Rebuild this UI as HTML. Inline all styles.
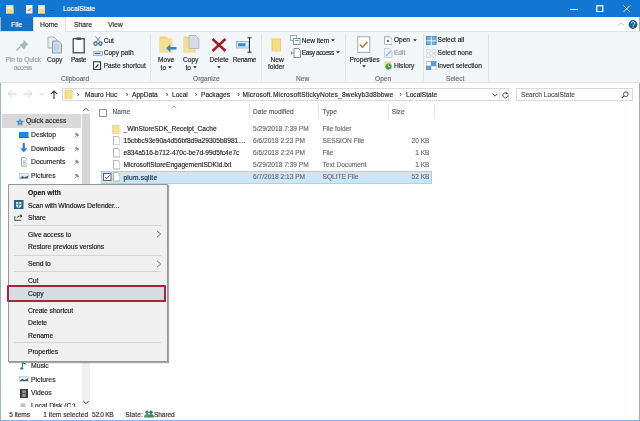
<!DOCTYPE html>
<html><head><meta charset="utf-8">
<style>
*{margin:0;padding:0;box-sizing:border-box}
html,body{width:640px;height:421px;overflow:hidden;background:#fff}
body{position:relative;font-family:"Liberation Sans",sans-serif;font-size:6.6px;color:#1e1e1e}
.t{position:absolute;white-space:nowrap;line-height:10px;height:10px;-webkit-text-stroke:0.15px currentColor}
.r{position:absolute;display:block}
#wrap{position:absolute;left:0;top:0;width:640px;height:421px;filter:blur(0.3px)}
</style></head><body><div id="wrap">

<div class="r" style="left:0px;top:0px;width:640px;height:17px;background:#1276d3"></div>
<svg class="r" style="left:6px;top:4.5px;" width="8" height="9" viewBox="0 0 8 9"><rect x="0" y="0" width="7.5" height="8.5" fill="#f4d77c"/><rect x="1.2" y="1.5" width="5" height="5.5" fill="#fdf3cf"/><rect x="0" y="4" width="7.5" height="4.5" fill="#f6dc8a"/></svg>
<svg class="r" style="left:25.5px;top:4.5px;" width="7" height="9" viewBox="0 0 7 9"><rect x="0" y="0" width="6.5" height="8.5" fill="#fbfbfb"/><path d="M1.5 4.8l1.2 1.2 2.3-2.8" fill="none" stroke="#d0563f" stroke-width="1"/></svg>
<svg class="r" style="left:38px;top:4.5px;" width="8" height="9" viewBox="0 0 8 9"><rect x="0" y="0" width="7" height="8.5" fill="#f4d77c"/><rect x="1.2" y="1.5" width="4.6" height="5.5" fill="#fdf3cf"/><rect x="0" y="4" width="7" height="4.5" fill="#f6dc8a"/></svg>
<div class="r" style="left:50px;top:9.5px;width:4px;height:1px;background:#2b4f78"></div>
<div class="t" style="left:63px;top:4px;color:#ffffff;font-size:6.8px;">LocalState</div>
<div class="r" style="left:570px;top:8.5px;width:7.5px;height:1px;background:#fff"></div>
<svg class="r" style="left:596px;top:4.5px;" width="7.5" height="7.5" viewBox="0 0 7.5 7.5"><rect x="0.75" y="0.75" width="6" height="6" fill="none" stroke="#e6f1fb" stroke-width="1.4"/></svg>
<svg class="r" style="left:623px;top:5px;" width="7.5" height="7.5" viewBox="0 0 7.5 7.5"><path d="M0.5 0.5L7 7M7 0.5L0.5 7" stroke="#eef6fd" stroke-width="0.9"/></svg>
<div class="r" style="left:0px;top:17px;width:640px;height:14px;background:#fff"></div>
<div class="r" style="left:0px;top:17px;width:33px;height:14px;background:#1672c6"></div>
<div class="t" style="left:11px;top:19.5px;color:#ffffff;font-size:6.8px;">File</div>
<div class="r" style="left:33px;top:17px;width:33px;height:15px;background:#f6f8fa;border:1px solid #dfe3e6;border-bottom:none;z-index:2"></div>
<div style="position:absolute;z-index:3;left:0;top:0">
<div class="t" style="left:40px;top:19.5px;color:#2b2b2b;font-size:6.8px;">Home</div>
</div>
<div class="t" style="left:74px;top:19.5px;color:#2b2b2b;font-size:6.8px;">Share</div>
<div class="t" style="left:108px;top:19.5px;color:#2b2b2b;font-size:6.8px;">View</div>
<svg class="r" style="left:617px;top:21px;" width="8" height="6" viewBox="0 0 8 6"><path d="M1.2 4.5L4 1.7 6.8 4.5" fill="none" stroke="#b5b5b5" stroke-width="0.9"/></svg>
<svg class="r" style="left:628px;top:19px;" width="11" height="11" viewBox="0 0 11 11"><circle cx="5" cy="5.5" r="4.4" fill="#1c5f95"/><path d="M3.5 4.2a1.6 1.6 0 1 1 2.4 1.4c-.6.3-.8.6-.8 1.1" fill="none" stroke="#fff" stroke-width="1"/><circle cx="5.1" cy="8" r=".6" fill="#fff"/></svg>
<div class="r" style="left:0px;top:31px;width:640px;height:52px;background:#f3f6f8;border-top:1px solid #dfe3e6;border-bottom:1px solid #e2e5e8;z-index:1"></div>
<div style="position:absolute;left:0;top:0;z-index:4">
<div class="r" style="left:150px;top:34px;width:1px;height:47px;background:#e2e3e4"></div>
<div class="r" style="left:261px;top:34px;width:1px;height:47px;background:#e2e3e4"></div>
<div class="r" style="left:345px;top:34px;width:1px;height:47px;background:#e2e3e4"></div>
<div class="r" style="left:423px;top:34px;width:1px;height:47px;background:#e2e3e4"></div>
<div class="r" style="left:488px;top:34px;width:1px;height:47px;background:#e2e3e4"></div>
<div class="t" style="left:61px;top:73.5px;color:#6f6f6f;font-size:6.6px;">Clipboard</div>
<div class="t" style="left:193px;top:73.5px;color:#6f6f6f;font-size:6.6px;">Organize</div>
<div class="t" style="left:296px;top:73.5px;color:#6f6f6f;font-size:6.6px;">New</div>
<div class="t" style="left:375px;top:73.5px;color:#6f6f6f;font-size:6.6px;">Open</div>
<div class="t" style="left:446px;top:73.5px;color:#6f6f6f;font-size:6.6px;">Select</div>
<div class="t" style="left:5.5px;top:55px;color:#9a9a9a;font-size:6.6px;">Pin to Quick</div>
<div class="t" style="left:14px;top:62.5px;color:#9a9a9a;font-size:6.6px;letter-spacing:-0.424px;">access</div>
<div class="t" style="left:47px;top:55px;color:#262626;font-size:6.6px;">Copy</div>
<div class="t" style="left:71px;top:55px;color:#262626;font-size:6.6px;letter-spacing:-0.375px;">Paste</div>
<div class="t" style="left:103.7px;top:35.5px;color:#262626;font-size:6.6px;">Cut</div>
<div class="t" style="left:103.7px;top:48.4px;color:#262626;font-size:6.6px;">Copy path</div>
<div class="t" style="left:103.7px;top:60.5px;color:#262626;font-size:6.6px;">Paste shortcut</div>
<div class="t" style="left:158px;top:54.7px;color:#262626;font-size:6.6px;">Move</div>
<div class="t" style="left:160.6px;top:62.5px;color:#262626;font-size:6.6px;">to</div>
<svg class="r" style="left:168.4px;top:66.1px" width="4" height="3" viewBox="0 0 4 3"><path d="M0.2 0.3h3.6L2 2.6z" fill="#222"/></svg>
<div class="t" style="left:183px;top:54.7px;color:#262626;font-size:6.6px;">Copy</div>
<div class="t" style="left:185.5px;top:62.5px;color:#262626;font-size:6.6px;">to</div>
<svg class="r" style="left:192.6px;top:66.1px" width="4" height="3" viewBox="0 0 4 3"><path d="M0.2 0.3h3.6L2 2.6z" fill="#222"/></svg>
<div class="t" style="left:209.6px;top:54.7px;color:#262626;font-size:6.6px;">Delete</div>
<svg class="r" style="left:217.3px;top:65.8px" width="4" height="3" viewBox="0 0 4 3"><path d="M0.2 0.3h3.6L2 2.6z" fill="#222"/></svg>
<div class="t" style="left:232.8px;top:54.7px;color:#262626;font-size:6.6px;letter-spacing:-0.291px;">Rename</div>
<div class="t" style="left:270.6px;top:54.9px;color:#262626;font-size:6.6px;">New</div>
<div class="t" style="left:268px;top:62.3px;color:#262626;font-size:6.6px;">folder</div>
<div class="t" style="left:301.8px;top:35.6px;color:#262626;font-size:6.6px;">New item</div>
<svg class="r" style="left:331.2px;top:39.0px" width="4" height="3" viewBox="0 0 4 3"><path d="M0.2 0.3h3.6L2 2.6z" fill="#222"/></svg>
<div class="t" style="left:301.8px;top:47.8px;color:#262626;font-size:6.6px;letter-spacing:-0.459px;">Easy access</div>
<svg class="r" style="left:335.8px;top:51.4px" width="4" height="3" viewBox="0 0 4 3"><path d="M0.2 0.3h3.6L2 2.6z" fill="#222"/></svg>
<div class="t" style="left:349.5px;top:55.1px;color:#262626;font-size:6.6px;">Properties</div>
<svg class="r" style="left:362px;top:65.39999999999999px" width="4" height="3" viewBox="0 0 4 3"><path d="M0.2 0.3h3.6L2 2.6z" fill="#222"/></svg>
<div class="t" style="left:393.9px;top:35.3px;color:#262626;font-size:6.6px;">Open</div>
<svg class="r" style="left:412.6px;top:38.9px" width="4" height="3" viewBox="0 0 4 3"><path d="M0.2 0.3h3.6L2 2.6z" fill="#222"/></svg>
<div class="t" style="left:393.9px;top:47.8px;color:#9a9a9a;font-size:6.6px;">Edit</div>
<div class="t" style="left:393.9px;top:60.8px;color:#262626;font-size:6.6px;">History</div>
<div class="t" style="left:437.5px;top:35.2px;color:#262626;font-size:6.6px;">Select all</div>
<div class="t" style="left:437.5px;top:48.3px;color:#262626;font-size:6.6px;">Select none</div>
<div class="t" style="left:437.5px;top:60.900000000000006px;color:#262626;font-size:6.6px;">Invert selection</div>
<svg class="r" style="left:15px;top:38px;" width="15" height="14" viewBox="0 0 15 14"><path d="M8.5 1.5l5 5-2 1-1.5 2.5-1 1.5-4.5-4.5 1.5-1 2.5-1.5z" fill="#a9b5c1"/><path d="M5.5 8.5L1.5 12.5" stroke="#a9b5c1" stroke-width="1.4"/></svg>
<svg class="r" style="left:47px;top:36px;" width="16" height="18" viewBox="0 0 16 18"><path d="M1 1h6l3 3v8H1z" fill="#e9eef2" stroke="#9aabb9" stroke-width="0.9"/><path d="M5.5 5h6l3 3v9h-9z" fill="#cfdde8" stroke="#7f98ad" stroke-width="0.9"/><path d="M7 9h5M7 11h5M7 13h5" stroke="#a9bccb" stroke-width="0.6"/></svg>
<svg class="r" style="left:72px;top:37px;" width="14" height="17" viewBox="0 0 14 17"><rect x="1.2" y="1.8" width="11" height="14" fill="#f7f9fb" stroke="#3b3b3b" stroke-width="1.2"/><rect x="4.5" y="0.5" width="4.5" height="2.2" fill="#3b3b3b"/></svg>
<svg class="r" style="left:92.5px;top:35.5px;" width="10" height="10" viewBox="0 0 10 10"><path d="M3 6L7.5 0.5M7 6L2.5 0.5" stroke="#7f8c96" stroke-width="0.9"/><circle cx="2.6" cy="7.6" r="1.7" fill="none" stroke="#2f7585" stroke-width="1.2"/><circle cx="7.4" cy="7.6" r="1.7" fill="none" stroke="#2f7585" stroke-width="1.2"/></svg>
<svg class="r" style="left:92.5px;top:50.5px;" width="10" height="5" viewBox="0 0 10 5"><rect x="0" y="0.5" width="9.5" height="4" fill="#d9e5ef" stroke="#7e9ab2" stroke-width="0.6"/><path d="M1.5 2.5h6" stroke="#3d6e9b" stroke-width="1.2"/></svg>
<svg class="r" style="left:93px;top:61px;" width="8.5" height="9" viewBox="0 0 8.5 9"><rect x="0.6" y="0.8" width="7" height="7.8" fill="#fff" stroke="#363636" stroke-width="1.1"/><path d="M2.6 6.6L5.4 3.3" stroke="#1a1a1a" stroke-width="1.3"/></svg>
<svg class="r" style="left:159px;top:36px;" width="18" height="17" viewBox="0 0 18 17"><path d="M0.5 0.5h7l2 2h3.5v14H0.5z" fill="#f4d57a"/><rect x="0.5" y="3" width="13" height="13.5" fill="#f7df91"/><path d="M17.5 12.3h-7" stroke="#3a87c4" stroke-width="2.6"/><path d="M7 12.3l4.3-4v8z" fill="#3a87c4"/></svg>
<svg class="r" style="left:183px;top:35px;" width="17" height="18" viewBox="0 0 17 18"><path d="M0.5 1.5h7l2 2h3v14H0.5z" fill="#f4d57a"/><rect x="0.5" y="4" width="12" height="13.5" fill="#f7df91"/><path d="M6 0.5h6.5l3.5 3.5v9.5H6z" fill="#d3dbe4" stroke="#a3b0bd" stroke-width="0.7"/></svg>
<svg class="r" style="left:211px;top:38px;" width="16" height="14" viewBox="0 0 16 14"><path d="M1.5 1L14.5 13M14.5 1L1.5 13" stroke="#a3182b" stroke-width="2.4"/></svg>
<svg class="r" style="left:236px;top:37px;" width="18" height="16" viewBox="0 0 18 16"><rect x="0.5" y="4.5" width="12.5" height="6.5" fill="#dbeaf7" stroke="#8fb3d3" stroke-width="0.8"/><rect x="2" y="6.3" width="7.5" height="3" fill="#3b89cc"/><path d="M13.5 1v14M11.5 0.8h4M11.5 15.2h4" stroke="#262626" stroke-width="1"/></svg>
<svg class="r" style="left:270.5px;top:37.5px;" width="11" height="14" viewBox="0 0 11 14"><rect x="0.5" y="0.5" width="9.5" height="13" fill="#f2cf66"/><rect x="2" y="1.5" width="7" height="11.5" fill="#f8dd8a"/></svg>
<svg class="r" style="left:290px;top:35px;" width="11" height="10" viewBox="0 0 11 10"><rect x="0.5" y="0.5" width="6" height="5" fill="#fff" stroke="#8d9aa6" stroke-width="0.8"/><rect x="3.5" y="3.5" width="6.5" height="6" fill="#fff" stroke="#6f7c88" stroke-width="0.8"/><path d="M5 5.5h3.5" stroke="#3a87c4" stroke-width="0.9"/></svg>
<svg class="r" style="left:291px;top:48px;" width="10" height="10" viewBox="0 0 10 10"><path d="M3 0.5h4.5l2 2v7H3z" fill="#fff" stroke="#6f6f6f" stroke-width="0.8"/><path d="M0.5 3.5v3M0.5 5h2" stroke="#6f6f6f" stroke-width="0.8"/></svg>
<svg class="r" style="left:357px;top:36px;" width="14" height="17" viewBox="0 0 14 17"><rect x="0.8" y="0.8" width="12" height="15.5" fill="#fff" stroke="#a7a7a7" stroke-width="1"/><path d="M3 8.5l2.5 2.8 5-5.5" fill="none" stroke="#c07a3a" stroke-width="1.6"/></svg>
<svg class="r" style="left:383.5px;top:36px;" width="8.5" height="9" viewBox="0 0 8.5 9"><path d="M0.5 0.5h5l2.5 2.5v5.5H0.5z" fill="#fff" stroke="#9ba7b1" stroke-width="0.8"/><circle cx="4" cy="5" r="1.2" fill="#2e8b57"/></svg>
<svg class="r" style="left:383.5px;top:48px;" width="9" height="10" viewBox="0 0 9 10"><path d="M0.5 0.5h5l2.5 2.5v6.5H0.5z" fill="#e8f0f8" stroke="#b8c9d8" stroke-width="0.8"/><path d="M2 8l5-5" stroke="#9db9d6" stroke-width="1.2"/></svg>
<svg class="r" style="left:383.5px;top:60.5px;" width="9" height="9.5" viewBox="0 0 9 9.5"><rect x="0.5" y="0.5" width="7" height="5" fill="#f4d57a"/><circle cx="4.5" cy="5.5" r="3.5" fill="#4e9a3f" stroke="#fff" stroke-width="0.6"/><path d="M4.5 3.5v2h1.6" stroke="#fff" stroke-width="0.7" fill="none"/></svg>
<svg class="r" style="left:426px;top:35.5px;" width="10.5" height="9.5" viewBox="0 0 10.5 9.5"><rect x="0.4" y="0.4" width="9.7" height="8.7" fill="#6aaee0" stroke="#3f86c2" stroke-width="0.8"/><path d="M5.25 0.5v8.5M0.5 4.75h9.5" stroke="#eaf4fb" stroke-width="1"/></svg>
<svg class="r" style="left:426px;top:48.5px;" width="10.5" height="9" viewBox="0 0 10.5 9"><g fill="none" stroke="#b0b7be" stroke-width="0.7" stroke-dasharray="1.2 0.6"><rect x="0.5" y="0.5" width="3.6" height="3.4" rx="0.6"/><rect x="6" y="0.5" width="3.6" height="3.4" rx="0.6"/><rect x="0.5" y="5" width="3.6" height="3.4" rx="0.6"/><rect x="6" y="5" width="3.6" height="3.4" rx="0.6"/></g></svg>
<svg class="r" style="left:426px;top:60.5px;" width="10.5" height="9.5" viewBox="0 0 10.5 9.5"><rect x="5" y="0.5" width="5" height="4.5" fill="#5ba0d6" stroke="#3e82bd" stroke-width="0.6"/><rect x="0.5" y="5" width="4.5" height="4" fill="#5ba0d6" stroke="#3e82bd" stroke-width="0.6"/><rect x="0.5" y="0.5" width="4.5" height="4.5" fill="#fff" stroke="#8faac2" stroke-width="0.6"/><rect x="5" y="5" width="5" height="4" fill="#fff" stroke="#8faac2" stroke-width="0.6"/></svg>
</div>
<div class="r" style="left:62px;top:88px;width:447px;height:13px;border:1px solid #d9d9d9;background:#fff"></div>
<div class="r" style="left:516px;top:88px;width:117px;height:13px;border:1px solid #d9d9d9;background:#fff"></div>
<div class="t" style="left:85px;top:89.5px;color:#262626;font-size:6.6px;">Mauro Huc</div>
<div class="t" style="left:132px;top:89.5px;color:#262626;font-size:6.6px;">AppData</div>
<div class="t" style="left:172px;top:89.5px;color:#262626;font-size:6.6px;">Local</div>
<div class="t" style="left:201px;top:89.5px;color:#262626;font-size:6.6px;">Packages</div>
<div class="t" style="left:242.5px;top:89.5px;color:#262626;font-size:6.6px;letter-spacing:0.181px;">Microsoft.MicrosoftStickyNotes_8wekyb3d8bbwe</div>
<div class="t" style="left:406px;top:89.5px;color:#262626;font-size:6.6px;">LocalState</div>
<div class="t" style="left:77px;top:89.5px;color:#555;font-size:6.6px;">&#8250;</div>
<div class="t" style="left:126px;top:89.5px;color:#555;font-size:6.6px;">&#8250;</div>
<div class="t" style="left:166px;top:89.5px;color:#555;font-size:6.6px;">&#8250;</div>
<div class="t" style="left:195px;top:89.5px;color:#555;font-size:6.6px;">&#8250;</div>
<div class="t" style="left:237.5px;top:89.5px;color:#555;font-size:6.6px;">&#8250;</div>
<div class="t" style="left:399.5px;top:89.5px;color:#555;font-size:6.6px;">&#8250;</div>
<div class="t" style="left:521px;top:89.5px;color:#555555;font-size:6.6px;">Search LocalState</div>
<svg class="r" style="left:7px;top:90px;" width="10" height="8" viewBox="0 0 10 8"><path d="M9.5 4H1.5M4.5 1L1.3 4l3.2 3" fill="none" stroke="#cfcfcf" stroke-width="1"/></svg>
<svg class="r" style="left:23px;top:90px;" width="10" height="8" viewBox="0 0 10 8"><path d="M0.5 4h8M5.5 1l3.2 3-3.2 3" fill="none" stroke="#cfcfcf" stroke-width="1"/></svg>
<svg class="r" style="left:39px;top:92px;" width="6" height="4" viewBox="0 0 6 4"><path d="M0.5 0.8L3 3.2 5.5 0.8" fill="none" stroke="#d5d5d5" stroke-width="0.9"/></svg>
<svg class="r" style="left:50px;top:89.5px;" width="8" height="9" viewBox="0 0 8 9"><path d="M4 9V1M0.8 4.2L4 1l3.2 3.2" fill="none" stroke="#353535" stroke-width="1.1"/></svg>
<svg class="r" style="left:64px;top:89px;" width="9" height="10" viewBox="0 0 9 10"><rect x="0.5" y="0.5" width="8" height="9.5" fill="#f1d16c"/><rect x="1.8" y="1.5" width="6" height="8" fill="#f8df92"/></svg>
<svg class="r" style="left:491.5px;top:92.5px;" width="6" height="4" viewBox="0 0 6 4"><path d="M0.6 0.8L3 3.2 5.4 0.8" fill="none" stroke="#444" stroke-width="1"/></svg>
<div class="r" style="left:499px;top:88px;width:1px;height:13px;background:#e3e3e3"></div>
<svg class="r" style="left:501.5px;top:90.5px;" width="7" height="8" viewBox="0 0 7 8"><path d="M5.3 2.6A2.6 2.6 0 1 0 6 4.5" fill="none" stroke="#444" stroke-width="0.9"/><path d="M3.8 0.8L5.8 2.4 3.8 3.6z" fill="#444"/></svg>
<svg class="r" style="left:620.5px;top:90.5px;" width="8" height="8" viewBox="0 0 8 8"><circle cx="4.8" cy="3.2" r="2.3" fill="none" stroke="#3a3a3a" stroke-width="0.9"/><path d="M3.1 4.9L0.8 7.2" stroke="#3a3a3a" stroke-width="1.1"/></svg>
<div class="t" style="left:112.5px;top:107px;color:#56606c;font-size:6.6px;">Name</div>
<div class="t" style="left:253px;top:107px;color:#56606c;font-size:6.6px;">Date modified</div>
<div class="t" style="left:322.5px;top:107px;color:#56606c;font-size:6.6px;">Type</div>
<div class="t" style="left:391.75px;top:107px;color:#56606c;font-size:6.6px;">Size</div>
<svg class="r" style="left:99px;top:108.5px;" width="8" height="8" viewBox="0 0 8 8"><rect x="0.5" y="0.5" width="7" height="7" fill="#fff" stroke="#8c8c8c" stroke-width="0.9"/></svg>
<svg class="r" style="left:171px;top:105px;" width="6" height="4" viewBox="0 0 6 4"><path d="M0.8 3.2L3 1 5.2 3.2" fill="none" stroke="#9aa0a6" stroke-width="0.8"/></svg>
<div class="r" style="left:248.5px;top:104px;width:1px;height:15px;background:#e6e6e6"></div>
<div class="r" style="left:388px;top:104px;width:1px;height:15px;background:#e6e6e6"></div>
<div class="r" style="left:318px;top:104px;width:1px;height:15px;background:#e6e6e6"></div>
<div class="r" style="left:433.5px;top:104px;width:1px;height:15px;background:#e6e6e6"></div>
<div class="r" style="left:100.5px;top:171px;width:331.5px;height:12.5px;background:#cbe6fb;border:1px solid #a9d2f2"></div>
<svg class="r" style="left:112px;top:125px;" width="8" height="9" viewBox="0 0 8 9"><rect x="0.3" y="0.3" width="7.2" height="8.4" fill="#f1d16c"/><rect x="1.3" y="1.2" width="5.5" height="7" fill="#f9e195"/></svg>
<svg class="r" style="left:112.5px;top:135.8px;" width="7.5" height="9.5" viewBox="0 0 7.5 9.5"><path d="M0.5 0.5h4.3l2.2 2.2v6.3H0.5z" fill="#fff" stroke="#a0a0a0" stroke-width="0.8"/></svg>
<svg class="r" style="left:112.5px;top:148.3px;" width="7.5" height="9.5" viewBox="0 0 7.5 9.5"><path d="M0.5 0.5h4.3l2.2 2.2v6.3H0.5z" fill="#fff" stroke="#a0a0a0" stroke-width="0.8"/></svg>
<svg class="r" style="left:112.5px;top:160.3px;" width="7.5" height="9.5" viewBox="0 0 7.5 9.5"><path d="M0.5 0.5h4.3l2.2 2.2v6.3H0.5z" fill="#fff" stroke="#a0a0a0" stroke-width="0.8"/></svg>
<svg class="r" style="left:112.5px;top:172.3px;" width="7.5" height="9.5" viewBox="0 0 7.5 9.5"><path d="M0.5 0.5h4.3l2.2 2.2v6.3H0.5z" fill="#fff" stroke="#a0a0a0" stroke-width="0.8"/></svg>
<svg class="r" style="left:103px;top:173px;" width="8.5" height="8" viewBox="0 0 8.5 8"><rect x="0.5" y="0.5" width="7.5" height="7" fill="#fff" stroke="#555" stroke-width="0.9"/><path d="M1.8 4l1.8 1.8 3-3.5" fill="none" stroke="#333" stroke-width="0.9"/></svg>
<div class="t" style="left:123.5px;top:123.75px;color:#262626;font-size:6.6px;">_WinStoreSDK_Receipt_Cache</div>
<div class="t" style="left:253px;top:123.75px;color:#6d6d6d;font-size:6.6px;">5/29/2018 7:39 PM</div>
<div class="t" style="left:322.5px;top:123.75px;color:#6d6d6d;font-size:6.6px;">File folder</div>
<div class="t" style="left:123.5px;top:135.5px;color:#262626;font-size:6.6px;">15cbbc93e90a4d56bf8d9a29305b8981....</div>
<div class="t" style="left:253px;top:135.5px;color:#6d6d6d;font-size:6.6px;">6/6/2018 2:23 PM</div>
<div class="t" style="left:322.5px;top:135.5px;color:#6d6d6d;font-size:6.6px;">SESSION File</div>
<div class="t" style="left:380px;width:49.5px;text-align:right;top:135.5px;color:#6d6d6d">20 KB</div>
<div class="t" style="left:123.5px;top:148px;color:#262626;font-size:6.6px;">e834a516-b712-470c-be7d-99d5fc4e7c</div>
<div class="t" style="left:253px;top:148px;color:#6d6d6d;font-size:6.6px;">6/6/2018 2:24 PM</div>
<div class="t" style="left:322.5px;top:148px;color:#6d6d6d;font-size:6.6px;">File</div>
<div class="t" style="left:380px;width:49.5px;text-align:right;top:148px;color:#6d6d6d">1 KB</div>
<div class="t" style="left:123.5px;top:160px;color:#262626;font-size:6.6px;">MicrosoftStoreEngagementSDKId.txt</div>
<div class="t" style="left:253px;top:160px;color:#6d6d6d;font-size:6.6px;">5/29/2018 7:39 PM</div>
<div class="t" style="left:322.5px;top:160px;color:#6d6d6d;font-size:6.6px;">Text Document</div>
<div class="t" style="left:380px;width:49.5px;text-align:right;top:160px;color:#6d6d6d">1 KB</div>
<div class="t" style="left:123.5px;top:172.6px;color:#14243a;font-size:6.6px;letter-spacing:0.205px;">plum.sqlite</div>
<div class="t" style="left:253px;top:172px;color:#6d6d6d;font-size:6.6px;">6/7/2018 2:13 PM</div>
<div class="t" style="left:322.5px;top:172px;color:#6d6d6d;font-size:6.6px;">SQLITE File</div>
<div class="t" style="left:380px;width:49.5px;text-align:right;top:172px;color:#6d6d6d">52 KB</div>
<div class="r" style="left:2px;top:114px;width:79px;height:14px;background:#d9d9d9"></div>
<div class="r" style="left:81.5px;top:113px;width:8.5px;height:295px;background:#f0f0f0"></div>
<div class="r" style="left:82px;top:114px;width:7.5px;height:242px;background:#d6d6d6"></div>
<svg class="r" style="left:82px;top:107px;" width="8" height="5" viewBox="0 0 8 5"><path d="M1.3 4L4 1.3 6.7 4" fill="none" stroke="#444" stroke-width="1"/></svg>
<svg class="r" style="left:82px;top:400px;" width="8" height="5" viewBox="0 0 8 5"><path d="M1.3 1L4 3.7 6.7 1" fill="none" stroke="#444" stroke-width="1"/></svg>
<svg class="r" style="left:15.5px;top:117.5px;" width="8" height="8" viewBox="0 0 8 8"><path d="M4 0.2l1.15 2.6 2.8.25-2.1 1.85.65 2.8L4 6.25 1.5 7.7l.65-2.8L0.05 3.05l2.8-.25z" fill="#3d84c6"/><circle cx="4" cy="4.3" r="1.1" fill="#8fc3ea"/></svg>
<svg class="r" style="left:19px;top:131.5px;" width="9.5" height="6.5" viewBox="0 0 9.5 6.5"><rect x="0" y="0" width="9.5" height="6.5" fill="#1e88df"/><rect x="0" y="5.5" width="9.5" height="1" fill="#0f5ea8"/></svg>
<svg class="r" style="left:19.5px;top:143px;" width="7.5" height="10" viewBox="0 0 7.5 10"><path d="M3.75 0v6.5" stroke="#2f7fcf" stroke-width="2.2"/><path d="M0.2 5.3L3.75 9.5 7.3 5.3z" fill="#2f7fcf"/></svg>
<svg class="r" style="left:20.5px;top:157px;" width="6.5" height="9.5" viewBox="0 0 6.5 9.5"><path d="M0.5 0.5h3.8l1.9 1.9v6.8H0.5z" fill="#f3f6f8" stroke="#8f9ba6" stroke-width="0.8"/><path d="M2 4h2.5M2 5.5h2.5M2 7h2.5" stroke="#6a8fb0" stroke-width="0.6"/></svg>
<svg class="r" style="left:19px;top:172.5px;" width="9.5" height="6.5" viewBox="0 0 9.5 6.5"><rect x="0.3" y="0.3" width="9" height="6" fill="#e3ecf3" stroke="#a8b6c2" stroke-width="0.5"/><path d="M0.5 5.5l3-2.5 2 1.5 3.5-2v3z" fill="#4a5a66"/></svg>
<svg class="r" style="left:73.5px;top:132px;" width="5.5" height="6" viewBox="0 0 5.5 6"><path d="M0.5 5.5l2-2M2 1.5l2.5 2.5M2.6 1l2 2-1.1 1.2-2.1-2.1z" fill="#8a8a8a" stroke="#8a8a8a" stroke-width="0.8"/></svg>
<svg class="r" style="left:73.5px;top:145.5px;" width="5.5" height="6" viewBox="0 0 5.5 6"><path d="M0.5 5.5l2-2M2 1.5l2.5 2.5M2.6 1l2 2-1.1 1.2-2.1-2.1z" fill="#8a8a8a" stroke="#8a8a8a" stroke-width="0.8"/></svg>
<svg class="r" style="left:73.5px;top:159px;" width="5.5" height="6" viewBox="0 0 5.5 6"><path d="M0.5 5.5l2-2M2 1.5l2.5 2.5M2.6 1l2 2-1.1 1.2-2.1-2.1z" fill="#8a8a8a" stroke="#8a8a8a" stroke-width="0.8"/></svg>
<svg class="r" style="left:73.5px;top:173px;" width="5.5" height="6" viewBox="0 0 5.5 6"><path d="M0.5 5.5l2-2M2 1.5l2.5 2.5M2.6 1l2 2-1.1 1.2-2.1-2.1z" fill="#8a8a8a" stroke="#8a8a8a" stroke-width="0.8"/></svg>
<svg class="r" style="left:19.5px;top:361.5px;" width="7" height="8" viewBox="0 0 7 8"><path d="M2.5 6.5V0.8l3.8 1.4" fill="none" stroke="#2c84b8" stroke-width="1"/><ellipse cx="1.8" cy="6.5" rx="1.6" ry="1.2" fill="#2c84b8"/></svg>
<svg class="r" style="left:19px;top:376px;" width="9.5" height="6" viewBox="0 0 9.5 6"><rect x="0.3" y="0.3" width="9" height="5.5" fill="#e3ecf3" stroke="#a8b6c2" stroke-width="0.5"/><path d="M0.5 5l3-2.2 2 1.3 3.5-1.8v2.7z" fill="#4a5a66"/></svg>
<svg class="r" style="left:19.5px;top:388.5px;" width="8" height="9" viewBox="0 0 8 9"><rect x="0" y="0" width="8" height="9" fill="#3a3a3a"/><rect x="2.2" y="1.3" width="3.6" height="2.8" fill="#9a9a9a"/><rect x="2.2" y="5" width="3.6" height="2.8" fill="#9a9a9a"/></svg>
<div class="t" style="left:26px;top:116.4px;color:#262626;font-size:6.8px;">Quick access</div>
<div class="t" style="left:31px;top:130.2px;color:#262626;font-size:6.8px;">Desktop</div>
<div class="t" style="left:31px;top:143.8px;color:#262626;font-size:6.8px;">Downloads</div>
<div class="t" style="left:31px;top:157.4px;color:#262626;font-size:6.8px;">Documents</div>
<div class="t" style="left:31px;top:171.2px;color:#262626;font-size:6.8px;">Pictures</div>
<div class="t" style="left:31px;top:360.7px;color:#262626;font-size:6.8px;">Music</div>
<div class="t" style="left:31px;top:374.5px;color:#262626;font-size:6.8px;">Pictures</div>
<div class="t" style="left:31px;top:388px;color:#262626;font-size:6.8px;">Videos</div>
<div style="position:absolute;left:0;top:398px;width:81px;height:8.5px;overflow:hidden"><div style="position:absolute;left:0;top:-398px">
<div class="t" style="left:31px;top:400.5px;color:#262626;font-size:6.8px;">Local Disk (C:)</div>
<svg class="r" style="left:19.5px;top:403px;" width="6" height="5" viewBox="0 0 6 5"><rect x="0.5" y="0.5" width="5" height="4.5" fill="#b8c4cc"/></svg>
</div></div>
<div class="t" style="left:9.3px;top:409.5px;color:#333;font-size:6.6px;letter-spacing:-0.082px;">5 items</div>
<div class="t" style="left:43.2px;top:409.5px;color:#333;font-size:6.6px;letter-spacing:0.041px;">1 item selected</div>
<div class="t" style="left:92px;top:409.5px;color:#333;font-size:6.6px;letter-spacing:-0.283px;">52.0 KB</div>
<div class="t" style="left:125.3px;top:409.5px;color:#333;font-size:6.6px;letter-spacing:0.043px;">State:</div>
<div class="t" style="left:154px;top:409.5px;color:#333;font-size:6.6px;letter-spacing:-0.097px;">Shared</div>
<svg class="r" style="left:144px;top:410px;" width="10" height="8" viewBox="0 0 10 8"><circle cx="3" cy="2.2" r="1.7" fill="#4f7d8c"/><circle cx="7" cy="2.2" r="1.7" fill="#3e6d7c"/><path d="M0 7.5c0-2.5 1.2-3.5 3-3.5s3 1 3 3.5z" fill="#4e9a6a"/><path d="M4 7.5c0-2.5 1.2-3.5 3-3.5s3 1 3 3.5z" fill="#3f8a5a"/></svg>
<div class="r" style="left:0px;top:420px;width:640px;height:1px;background:#86b4df"></div>
<div class="r" style="left:0px;top:17px;width:1px;height:404px;background:#9fb2c0"></div>
<div class="r" style="left:639px;top:17px;width:1px;height:404px;background:#a3aeb8"></div>
<div class="r" style="left:8px;top:184px;width:160px;height:177.5px;background:#f0f0f0;border:1px solid #979797;box-shadow:1px 1px 1px rgba(0,0,0,.35);z-index:10"></div>
<div style="position:absolute;left:0;top:0;z-index:11">
<div class="t" style="left:28px;top:187.7px;color:#1a1a1a;font-size:6.8px;font-weight:bold">Open with</div>
<svg class="r" style="left:14px;top:200px;" width="9.5" height="9" viewBox="0 0 9.5 9"><rect x="0" y="0" width="9.5" height="9" fill="#27617a"/><path d="M2 2h5.5v3.3c0 1.5-1.3 2.5-2.75 3-1.45-.5-2.75-1.5-2.75-3z" fill="#d9eef5"/><path d="M4.75 2v6M2 4.3h5.5" stroke="#27617a" stroke-width="0.8"/></svg>
<svg class="r" style="left:14px;top:213px;" width="9" height="8" viewBox="0 0 9 8"><path d="M0.8 3v4.3h6.5" fill="none" stroke="#3a3a3a" stroke-width="0.9"/><path d="M2.5 5.5c.3-2 1.8-3 4-3V1l2 2-2 2V3.6c-1.8 0-3 .6-4 1.9z" fill="#3a3a3a"/></svg>
<svg class="r" style="left:155.5px;top:230px;" width="6" height="8" viewBox="0 0 6 8"><path d="M1 0.8L4.6 4 1 7.2" fill="none" stroke="#5a5a5a" stroke-width="0.9"/></svg>
<svg class="r" style="left:155.5px;top:259.8px;" width="6" height="8" viewBox="0 0 6 8"><path d="M1 0.8L4.6 4 1 7.2" fill="none" stroke="#5a5a5a" stroke-width="0.9"/></svg>
<div class="t" style="left:28px;top:200.7px;color:#1a1a1a;font-size:6.8px;letter-spacing:-0.1px">Scan with Windows Defender...</div>
<div class="t" style="left:28px;top:213.2px;color:#1a1a1a;font-size:6.8px;letter-spacing:-0.1px">Share</div>
<div class="r" style="left:14px;top:225px;width:147px;height:1px;background:#d4d4d4"></div>
<div class="t" style="left:28px;top:229.7px;color:#1a1a1a;font-size:6.8px;letter-spacing:-0.1px">Give access to</div>
<div class="t" style="left:28px;top:241.7px;color:#1a1a1a;font-size:6.8px;letter-spacing:-0.1px">Restore previous versions</div>
<div class="r" style="left:14px;top:255px;width:147px;height:1px;background:#d4d4d4"></div>
<div class="t" style="left:28px;top:259.2px;color:#1a1a1a;font-size:6.8px;letter-spacing:-0.1px">Send to</div>
<div class="r" style="left:14px;top:271px;width:147px;height:1px;background:#d4d4d4"></div>
<div class="t" style="left:28px;top:275.7px;color:#1a1a1a;font-size:6.8px;letter-spacing:-0.1px">Cut</div>
<div class="r" style="left:7px;top:285px;width:159px;height:16.5px;background:#d6dde1;border:2px solid #a8263a;border-radius:1px"></div>
<div class="t" style="left:28px;top:289.0px;color:#1a1a1a;font-size:6.8px;letter-spacing:-0.1px">Copy</div>
<div class="t" style="left:28px;top:305.7px;color:#1a1a1a;font-size:6.8px;letter-spacing:-0.1px">Create shortcut</div>
<div class="t" style="left:28px;top:317.7px;color:#1a1a1a;font-size:6.8px;letter-spacing:-0.1px">Delete</div>
<div class="t" style="left:28px;top:330.7px;color:#1a1a1a;font-size:6.8px;letter-spacing:-0.1px">Rename</div>
<div class="r" style="left:14px;top:342px;width:147px;height:1px;background:#d4d4d4"></div>
<div class="t" style="left:28px;top:346.7px;color:#1a1a1a;font-size:6.8px;letter-spacing:-0.1px">Properties</div>
</div>
</div></body></html>
